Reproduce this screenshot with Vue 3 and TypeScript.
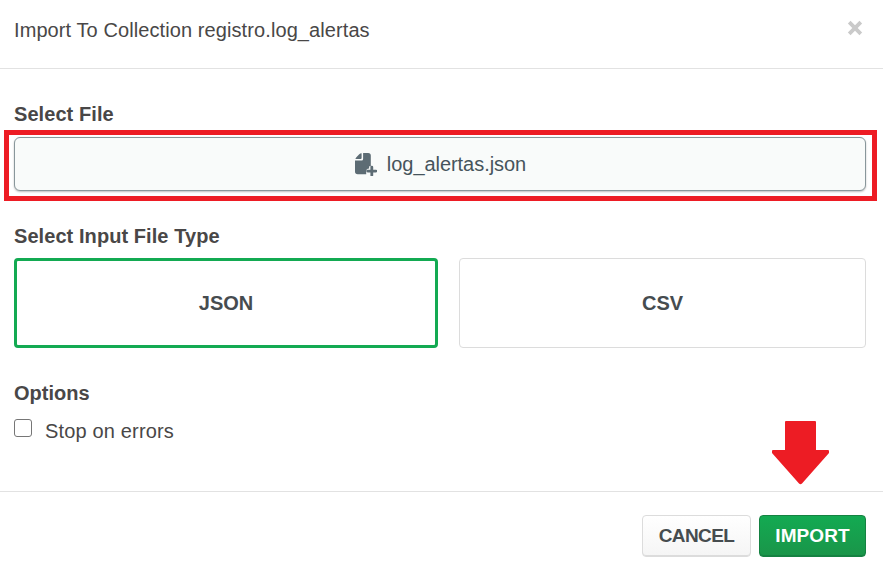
<script setup lang="ts">
import { ref } from 'vue'

type FileType = 'JSON' | 'CSV'

const collection = 'registro.log_alertas'
const fileName = 'log_alertas.json'
const fileTypes: FileType[] = ['JSON', 'CSV']
const selected = ref<FileType>('JSON')
const stopOnErrors = ref(false)
</script>

<template>
  <div class="modal">
    <header class="header">
      <h4 class="title">Import To Collection {{ collection }}</h4>
      <button class="close" type="button" aria-label="Close">
        <svg width="16" height="16" viewBox="0 0 16 16">
          <path d="M2.2 2.2L13.8 13.8M13.8 2.2L2.2 13.8" stroke="#cacaca" stroke-width="3.8" />
        </svg>
      </button>
    </header>

    <main class="body">
      <h5 class="label select-file">Select File</h5>
      <div class="file-wrap">
        <button class="file" type="button">
          <svg class="file-icon" width="22" height="23" viewBox="0 0 22 23">
            <path d="M8.1 0V6.1Q8.1 7.6 6.6 7.6H0V18.6Q0 21.3 2.7 21.3H11.2V18.4Q11.2 15.7 14.1 15.5V13.2H15.8V2.6Q15.8 0 13.2 0Z" fill="#5d6c74" />
            <path d="M6.6 .3V5.1Q6.6 6.1 5.6 6.1H.4Q.7 4.9 1.6 4L4 1.5Q5.2 .4 6.6 .3Z" fill="#5d6c74" />
            <path d="M16.8 14.1V22.2M12.7 18.1H20.9" stroke="#5d6c74" stroke-width="2.8" stroke-linecap="round" />
          </svg>
          <span class="file-name">{{ fileName }}</span>
        </button>
        <div class="highlight"></div>
      </div>

      <h5 class="label input-type">Select Input File Type</h5>
      <div class="types">
        <button
          v-for="type in fileTypes"
          :key="type"
          type="button"
          class="type"
          :class="{ selected: selected === type }"
          @click="selected = type"
        >
          <span>{{ type }}</span>
        </button>
      </div>

      <h5 class="label options">Options</h5>
      <label class="check">
        <input v-model="stopOnErrors" type="checkbox" />
        <span>Stop on errors</span>
      </label>
    </main>

    <footer class="footer">
      <button class="btn cancel" type="button"><span>CANCEL</span></button>
      <button class="btn import" type="button"><span>IMPORT</span></button>
      <svg class="arrow" width="58" height="64" viewBox="0 0 58 64">
        <path d="M13 1Q13 0 14 0H43Q44 0 44 1V29H56Q57 29 57 30V32L30 62.4Q28.5 64 27 62.4L0 32V30Q0 29 1 29H13Z" fill="#ed1c24" />
      </svg>
    </footer>
  </div>
</template>

<style>
body {
  background: #fff;
}
</style>

<style scoped>
.modal,
.modal * {
  box-sizing: border-box;
}
.modal {
  width: 883px;
  height: 574px;
  display: flex;
  flex-direction: column;
  background: #fff;
  color: #494747;
  font-family: "Liberation Sans", Arial, sans-serif;
  font-size: 20px;
  overflow: hidden;
}
button {
  font: inherit;
  color: inherit;
  padding: 0;
  margin: 0;
}
h4,
h5 {
  margin: 0;
}
.header {
  height: 69px;
  flex: none;
  display: flex;
  justify-content: space-between;
  align-items: flex-start;
  padding: 18px 20px 0 14px;
  border-bottom: 1px solid #e2e2e2;
}
.title {
  font-size: 20px;
  line-height: 24px;
  font-weight: 400;
  letter-spacing: 0.09px;
}
.close {
  width: 16px;
  height: 16px;
  margin-top: 2px;
  border: 0;
  background: none;
}
.close svg {
  display: block;
}
.body {
  height: 422px;
  flex: none;
  padding: 33px 17px 0 14px;
}
.label {
  font-size: 20px;
  line-height: 24px;
  font-weight: 700;
  letter-spacing: 0.07px;
}
.file-wrap {
  position: relative;
  margin-top: 11px;
}
.file {
  width: 852px;
  height: 54px;
  display: flex;
  align-items: center;
  justify-content: center;
  gap: 10px;
  background: #f9fbfa;
  border: 1px solid #89979b;
  border-radius: 6px;
  box-shadow: 0 1px 2px rgba(0, 0, 0, 0.25);
  color: #46545c;
}
.file-icon {
  margin-left: 1px;
}
.file-name {
  line-height: 24px;
  letter-spacing: -0.05px;
}
.highlight {
  position: absolute;
  left: -10px;
  top: -7px;
  width: 873px;
  height: 71px;
  border: 5px solid #ed1c24;
  pointer-events: none;
}
.input-type {
  margin-top: 33px;
}
.types {
  display: grid;
  grid-template-columns: 424px 407px;
  gap: 21px;
  margin-top: 10px;
}
.type {
  height: 90px;
  border: 1px solid #dcdcdc;
  border-radius: 4px;
  background: #fff;
  color: #464c4f;
  font-weight: 700;
}
.type.selected {
  border: 3px solid #13aa52;
}
.options {
  margin-top: 33px;
  letter-spacing: 0;
}
.check {
  display: flex;
  align-items: flex-start;
  gap: 13px;
  margin-top: 14px;
}
.check input {
  appearance: none;
  width: 18px;
  height: 18px;
  margin: 0;
  border: 1px solid #767676;
  border-radius: 3px;
  background: #fff;
}
.check input:checked {
  background: #13aa52;
}
.check span {
  line-height: 24px;
  letter-spacing: 0.16px;
}
.footer {
  position: relative;
  flex: 1;
  display: flex;
  justify-content: flex-end;
  align-items: flex-start;
  gap: 8px;
  padding: 23px 17px 0 0;
  border-top: 1px solid #e2e2e2;
}
.btn {
  height: 42px;
  padding-bottom: 1px;
  border-radius: 4px;
  font-size: 19px;
  font-weight: 700;
}
.cancel {
  width: 109px;
  color: #464c4f;
  border: 1px solid #dcdcdc;
  background: linear-gradient(#fff, #f5f5f5);
  box-shadow: inset 0 -1px 0 #dcdcdc;
  letter-spacing: -0.6px;
}
.import {
  width: 107px;
  color: #fff;
  border: 1px solid #158242;
  background: linear-gradient(#13aa52, #1a9549);
  box-shadow: inset 0 -1px 0 #158242;
  letter-spacing: 0.1px;
}
.arrow {
  position: absolute;
  left: 772px;
  top: -71px;
}
</style>
